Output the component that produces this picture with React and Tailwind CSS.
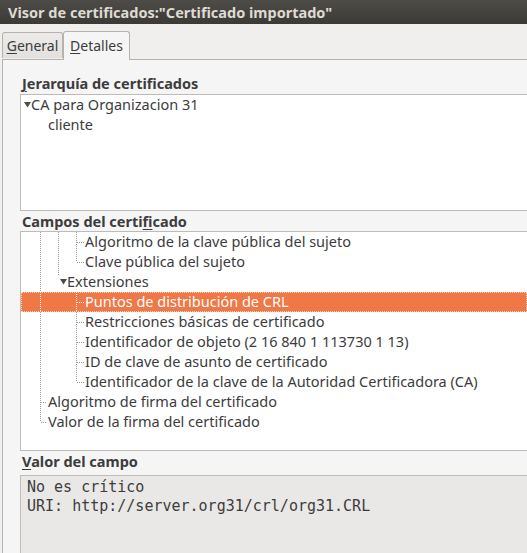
import React from 'react'

const FIELDS = [
  { depth: 3, text: 'Algoritmo de la clave pública del sujeto' },
  { depth: 3, text: 'Clave pública del sujeto' },
  { depth: 2, text: 'Extensiones', open: true },
  { depth: 3, text: 'Puntos de distribución de CRL', selected: true },
  { depth: 3, text: 'Restricciones básicas de certificado' },
  { depth: 3, text: 'Identificador de objeto (2 16 840 1 113730 1 13)' },
  { depth: 3, text: 'ID de clave de asunto de certificado' },
  { depth: 3, text: 'Identificador de la clave de la Autoridad Certificadora (CA)' },
  { depth: 1, text: 'Algoritmo de firma del certificado' },
  { depth: 1, text: 'Valor de la firma del certificado' },
]

// label offset inside the tree box, per depth (expander rows start earlier)
const INDENT = {
  1: 'pl-[27px]',
  2: 'pl-[39px]',
  3: 'pl-[64px]',
}

function Expander() {
  return (
    <svg width="7" height="6" viewBox="0 0 7 6" className="shrink-0">
      <polygon points="0,0 7,0 3.5,5.5" fill="#4c4c4c" />
    </svg>
  )
}

function Mn({ children }) {
  return <span className="underline underline-offset-[2px] decoration-1">{children}</span>
}

function Heading({ children }) {
  return <div className="font-bold text-[14.5px] leading-[20px] text-[#3c3c3c] pl-[19px]">{children}</div>
}

// dotted guide lines of the fields tree, drawn over the rows
function TreeLines() {
  const dot = 'stroke-[#9a9a9a] [stroke-dasharray:1_1]'
  const sel = 'stroke-white [stroke-dasharray:1_1]'
  const horiz = [0, 1, 3, 4, 5, 6, 7]
  return (
    <svg className="absolute left-0 top-0 pointer-events-none" width="200" height="220">
      <line x1="19.5" y1="0" x2="19.5" y2="190" className={dot} />
      <line x1="37.5" y1="0" x2="37.5" y2="44" className={dot} />
      <line x1="55.5" y1="0" x2="55.5" y2="30" className={dot} />
      <line x1="55.5" y1="60" x2="55.5" y2="150" className={dot} />
      {horiz.map(i => (
        <line key={i} x1="56" y1={10.5 + i * 20} x2="63" y2={10.5 + i * 20} className={i === 3 ? sel : dot} />
      ))}
      <line x1="20" y1="170.5" x2="26" y2="170.5" className={dot} />
      <line x1="20" y1="190.5" x2="26" y2="190.5" className={dot} />
      <line x1="19.5" y1="60" x2="19.5" y2="80" className={sel} />
      <line x1="55.5" y1="60" x2="55.5" y2="80" className={sel} />
    </svg>
  )
}

export default function App() {
  return (
    <div className="w-[527px] h-[553px] overflow-hidden bg-[#f0efed] flex flex-col text-[#3c3c3c] font-['Noto_Sans',sans-serif]">
      {/* title bar */}
      <div className="h-[24px] shrink-0 bg-gradient-to-b from-[#4d4c47] to-[#3b3a36] flex items-center pl-[8px]">
        <span className="text-[#dfdbd2] font-bold text-[14.5px] leading-none">
          Visor de certificados:"Certificado importado"
        </span>
      </div>

      {/* tabs */}
      <div className="h-[35px] shrink-0 flex items-end pl-[2px] relative z-10">
        <div className="h-[26px] w-[61px] border border-b-0 border-[#b6b3ad] rounded-t-[3px] bg-gradient-to-b from-[#ecebe9] to-[#e2e1df] flex items-center justify-center text-[14px] mb-[1px]">
          <span><Mn>G</Mn>eneral</span>
        </div>
        <div className="h-[29px] w-[67px] border border-b-0 border-[#b6b3ad] rounded-t-[3px] bg-[#f5f5f5] flex items-center justify-center text-[14px] -mb-[1px] pb-[2px]">
          <span><Mn>D</Mn>etalles</span>
        </div>
      </div>

      {/* page */}
      <div className="flex-1 ml-[2px] border-l border-t border-[#b6b3ad] bg-[#f5f5f5] flex flex-col pt-[13px]">
        <Heading><Mn>J</Mn>erarquía de certificados</Heading>
        <div className="ml-[17px] mt-[1px] h-[117px] bg-white border-l border-y border-[#bfbcb7] text-[14.5px]">
          <div className="h-[20px] flex items-center pl-[3px]">
            <Expander />
            <span>CA para Organizacion 31</span>
          </div>
          <div className="h-[20px] flex items-center pl-[27px]">cliente</div>
        </div>

        <Heading>Campos del certi<Mn>f</Mn>icado</Heading>
        <div className="ml-[17px] h-[220px] bg-white border-l border-y border-[#bfbcb7] text-[14.5px] relative">
          {FIELDS.map((f, i) => (
            <div
              key={i}
              className={
                'h-[20px] flex items-center whitespace-nowrap ' + INDENT[f.depth] + ' ' +
                (f.selected ? 'bg-[#f07746] text-white outline outline-1 outline-dotted outline-[#ffd2bd] -outline-offset-1' : '')
              }
            >
              {f.open && <Expander />}
              <span>{f.text}</span>
            </div>
          ))}
          <TreeLines />
        </div>

        <Heading><Mn>V</Mn>alor del campo</Heading>
        <div className="ml-[17px] mt-[4px] flex-1 bg-[#e9e8e6] border-l border-t border-[#bfbcb7] px-[6px] pt-[2px] text-[15px] leading-[19px] text-[#3c3c3c] whitespace-pre font-['DejaVu_Sans_Mono',monospace]">
          {'No es crítico\nURI: http://server.org31/crl/org31.CRL'}
        </div>
      </div>
    </div>
  )
}
